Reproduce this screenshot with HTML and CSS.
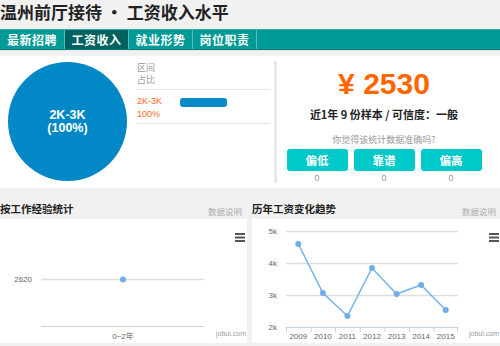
FILE: index.html
```html
<!DOCTYPE html>
<html lang="zh-CN">
<head>
<meta charset="utf-8">
<title>温州前厅接待 工资收入水平</title>
<link rel="stylesheet" href="styles.css">
</head>
<body>
<div class="page">
  <h1 class="title">温州前厅接待 • 工资收入水平</h1>
  <nav class="tabs">
    <a class="tab">最新招聘</a>
    <a class="tab active">工资收入</a>
    <a class="tab">就业形势</a>
    <a class="tab">岗位职责</a>
  </nav>

  <section class="summary">
    <div class="dist">
      <div class="pie"><span>2K-3K<br>(100%)</span></div>
      <div class="legend">
        <div class="legend-head">
          <div>区间</div>
          <div>占比</div>
        </div>
        <div class="legend-row">
          <div class="legend-text">
            <div>2K-3K</div>
            <div>100%</div>
          </div>
          <div class="legend-bar"></div>
        </div>
      </div>
    </div>
    <div class="divider"></div>
    <div class="salary">
      <div class="price">¥ 2530</div>
      <div class="sample">近1年 9 份样本 / 可信度：一般</div>
      <div class="question">你觉得该统计数据准确吗?</div>
      <div class="votes">
        <div class="vote"><div class="btn">偏低</div><div class="count">0</div></div>
        <div class="vote"><div class="btn">靠谱</div><div class="count">0</div></div>
        <div class="vote"><div class="btn">偏高</div><div class="count">0</div></div>
      </div>
    </div>
  </section>

  <section class="charts">
    <div class="chart-col col-left">
      <div class="chart-head">
        <h2 class="chart-title">按工作经验统计</h2>
        <span class="note">数据说明</span>
      </div>
      <div class="chart-box">
        <svg class="chart-svg" width="247" height="124" viewBox="0 0 247 124">
          <text class="axis-label" x="32" y="63" text-anchor="end">2620</text>
          <line class="grid" x1="41" y1="60.5" x2="204" y2="60.5"/>
          <circle class="dot" cx="123" cy="60.5" r="3"/>
          <line class="axis" x1="41" y1="107.5" x2="204" y2="107.5"/>
          <text class="axis-label" x="123" y="120" text-anchor="middle">0~2年</text>
          <text class="credit" x="246" y="117" text-anchor="end">jobui.com</text>
          <rect class="menu" x="235" y="14" width="10" height="2"/>
          <rect class="menu" x="235" y="17.5" width="10" height="2"/>
          <rect class="menu" x="235" y="21" width="10" height="2"/>
        </svg>
      </div>
    </div>
    <div class="chart-col col-right">
      <div class="chart-head">
        <h2 class="chart-title">历年工资变化趋势</h2>
        <span class="note">数据说明</span>
      </div>
      <div class="chart-box">
        <svg class="chart-svg" width="248" height="124" viewBox="0 0 248 124">
          <text class="axis-label" x="25" y="15" text-anchor="end">5k</text>
          <text class="axis-label" x="25" y="47" text-anchor="end">4k</text>
          <text class="axis-label" x="25" y="79" text-anchor="end">3k</text>
          <text class="axis-label" x="25" y="111" text-anchor="end">2k</text>
          <line class="grid" x1="34" y1="12.5" x2="206" y2="12.5"/>
          <line class="grid" x1="34" y1="44.5" x2="206" y2="44.5"/>
          <line class="grid" x1="34" y1="76.5" x2="206" y2="76.5"/>
          <line class="axis" x1="34" y1="108.5" x2="206" y2="108.5"/>
          <line class="axis" x1="34.5" y1="108" x2="34.5" y2="113"/>
          <line class="axis" x1="59.1" y1="108" x2="59.1" y2="113"/>
          <line class="axis" x1="83.6" y1="108" x2="83.6" y2="113"/>
          <line class="axis" x1="108.2" y1="108" x2="108.2" y2="113"/>
          <line class="axis" x1="132.8" y1="108" x2="132.8" y2="113"/>
          <line class="axis" x1="157.4" y1="108" x2="157.4" y2="113"/>
          <line class="axis" x1="181.9" y1="108" x2="181.9" y2="113"/>
          <line class="axis" x1="205.5" y1="108" x2="205.5" y2="113"/>
          <text class="axis-label" x="46.3" y="120" text-anchor="middle">2009</text>
          <text class="axis-label" x="70.9" y="120" text-anchor="middle">2010</text>
          <text class="axis-label" x="95.4" y="120" text-anchor="middle">2011</text>
          <text class="axis-label" x="120" y="120" text-anchor="middle">2012</text>
          <text class="axis-label" x="144.6" y="120" text-anchor="middle">2013</text>
          <text class="axis-label" x="169.1" y="120" text-anchor="middle">2014</text>
          <text class="axis-label" x="193.7" y="120" text-anchor="middle">2015</text>
          <polyline class="series" points="46.3,25 70.9,74 95.4,97 120,49 144.6,75 169.1,66 193.7,91"/>
          <circle class="dot" cx="46.3" cy="25" r="3"/>
          <circle class="dot" cx="70.9" cy="74" r="3"/>
          <circle class="dot" cx="95.4" cy="97" r="3"/>
          <circle class="dot" cx="120" cy="49" r="3"/>
          <circle class="dot" cx="144.6" cy="75" r="3"/>
          <circle class="dot" cx="169.1" cy="66" r="3"/>
          <circle class="dot" cx="193.7" cy="91" r="3"/>
          <text class="credit" x="247" y="117" text-anchor="end">jobui.com</text>
          <rect class="menu" x="237" y="14" width="10" height="2"/>
          <rect class="menu" x="237" y="17.5" width="10" height="2"/>
          <rect class="menu" x="237" y="21" width="10" height="2"/>
        </svg>
      </div>
    </div>
  </section>
</div>
</body>
</html>
```

FILE: styles.css
```css
html, body {
  margin: 0;
  padding: 0;
}
body {
  background: #f1f1f1;
  font-family: "Noto Sans CJK SC", "Liberation Sans", sans-serif;
  width: 500px;
  height: 346px;
  overflow: hidden;
}
.page {
  width: 500px;
}
.title {
  margin: 0;
  height: 29px;
  font-size: 17px;
  line-height: 23px;
  font-weight: bold;
  color: #222;
  white-space: nowrap;
}
.tabs {
  display: flex;
  height: 19px;
  background: #009a96;
  border-top: 1px solid #2aaaa6;
  border-bottom: 1px solid #00807c;
  box-shadow: 0 1px 0 #f2e2e2;
}
.tab {
  display: block;
  width: 63px;
  border-right: 1px solid #52bdb9;
  color: #fff;
  font-size: 12px;
  font-weight: bold;
  line-height: 19px;
  text-align: center;
  letter-spacing: 0.5px;
}
.tab:first-child {
  width: 64px;
}
.tab.active {
  background: #00625e;
}

.summary {
  margin-top: 6px;
  height: 132px;
  background: #fff;
  display: flex;
}
.dist {
  width: 274px;
  display: flex;
}
.pie {
  width: 119px;
  height: 119px;
  margin: 6px 0 0 8px;
  border-radius: 50%;
  background: #0288c6;
  color: #fff;
  display: flex;
  align-items: center;
  justify-content: center;
  text-align: center;
  font-family: "Liberation Sans", sans-serif;
  font-weight: bold;
  font-size: 12.5px;
  line-height: 13px;
}
.legend {
  margin-left: 10px;
  width: 133px;
  font-size: 9px;
  line-height: 12px;
}
.legend-head {
  padding: 6px 0 3px;
  color: #999;
  border-bottom: 1px solid #e6e6e6;
}
.legend-row {
  display: flex;
  height: 34px;
  border-bottom: 1px solid #e6e6e6;
  box-sizing: border-box;
  padding-top: 5px;
}
.legend-text {
  width: 43px;
  color: #ff6a1a;
  font-family: "Liberation Sans", "Noto Sans CJK SC", sans-serif;
  line-height: 13px;
}
.legend-bar {
  width: 47px;
  height: 9px;
  margin-top: 3px;
  border-radius: 3px;
  background: #0a8ac6;
}
.divider {
  width: 3px;
  margin: 5px 0;
  background: #e8e8e8;
}
.salary {
  flex: 1;
  display: flex;
  flex-direction: column;
  align-items: center;
  padding-right: 9px;
}
.price {
  margin-top: 11px;
  font-family: "Liberation Sans", sans-serif;
  font-weight: bold;
  font-size: 30px;
  line-height: 34px;
  color: #ff6600;
}
.sample {
  margin-top: 6px;
  font-size: 11px;
  line-height: 14px;
  font-weight: bold;
  color: #222;
}
.question {
  margin-top: 13px;
  font-size: 9px;
  line-height: 12px;
  color: #999;
}
.votes {
  display: flex;
  gap: 6px;
  margin-top: 3px;
}
.vote {
  width: 61px;
}
.btn {
  height: 22px;
  border-radius: 3px;
  background: #00c9c9;
  color: #fff;
  font-size: 11.5px;
  font-weight: bold;
  line-height: 22px;
  text-align: center;
}
.count {
  margin-top: 1px;
  font-family: "Liberation Sans", sans-serif;
  font-size: 9px;
  line-height: 12px;
  color: #999;
  text-align: center;
}

.charts {
  display: flex;
  gap: 5px;
}
.chart-col {
  display: flex;
  flex-direction: column;
}
.col-left {
  width: 247px;
}
.col-right {
  width: 248px;
}
.chart-head {
  height: 31px;
  display: flex;
  justify-content: space-between;
  align-items: flex-start;
}
.chart-title {
  margin: 14px 0 0;
  font-size: 10.5px;
  line-height: 14px;
  font-weight: bold;
  color: #222;
  white-space: nowrap;
}
.note {
  margin-top: 17px;
  font-size: 8.5px;
  line-height: 12px;
  color: #aaa;
}
.col-left .note {
  margin-right: 5px;
}
.col-right .note {
  margin-right: 4px;
}
.chart-box {
  height: 124px;
  background: #fff;
}
.chart-svg {
  display: block;
}
.axis-label {
  font-family: "Liberation Sans", "Noto Sans CJK SC", sans-serif;
  font-size: 8px;
  fill: #666;
}
.credit {
  font-family: "Liberation Sans", sans-serif;
  font-size: 7px;
  fill: #999;
}
.grid {
  stroke: #dedede;
  stroke-width: 1.5;
}
.axis {
  stroke: #c4d2e2;
  stroke-width: 1;
}
.series {
  fill: none;
  stroke: #7cb5ec;
  stroke-width: 1.6;
}
.dot {
  fill: #6faee9;
}
.menu {
  fill: #555;
}
```
